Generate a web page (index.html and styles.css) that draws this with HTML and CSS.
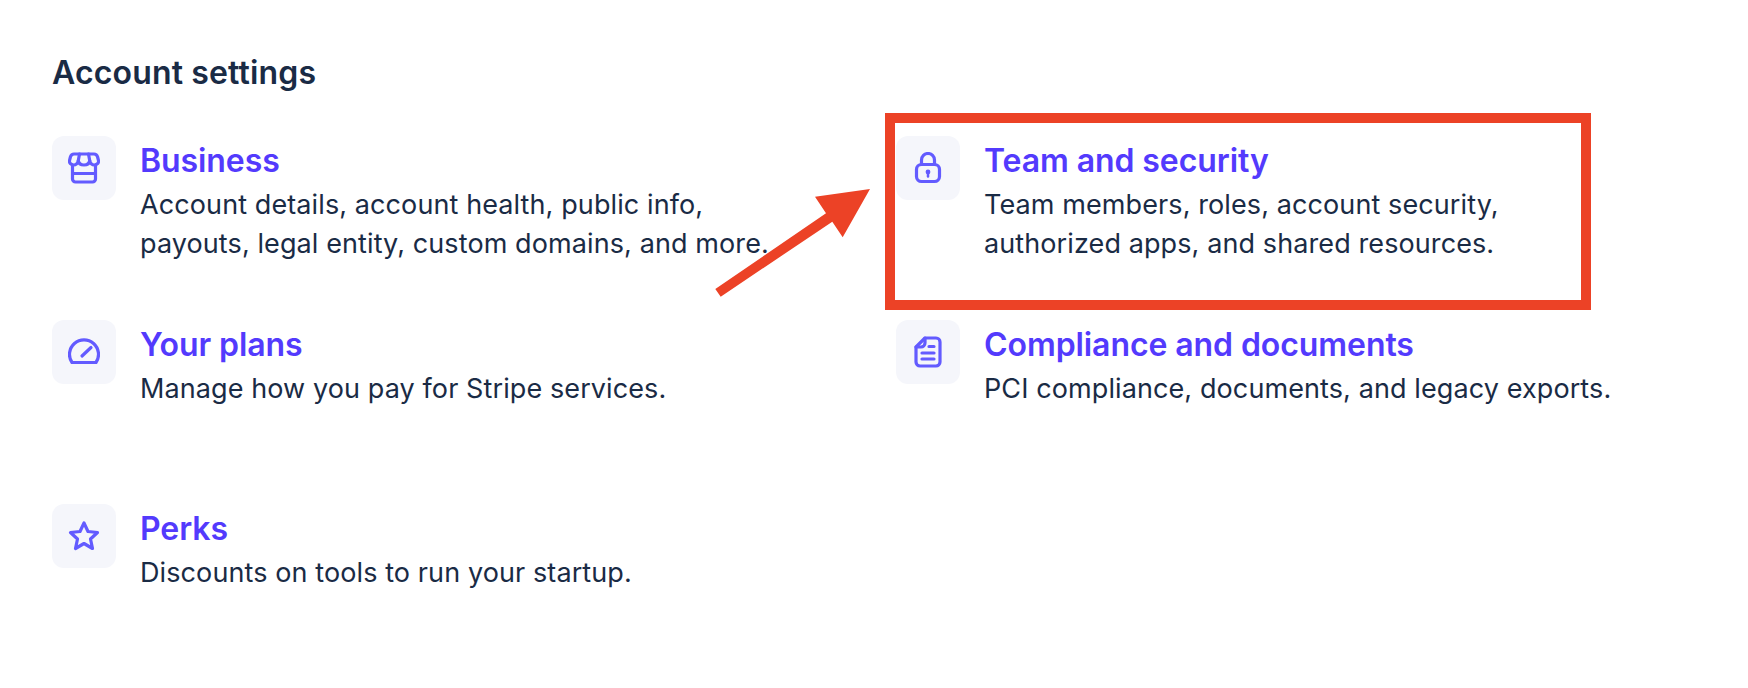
FILE: index.html
```html
<!DOCTYPE html>
<html>
<head>
    <title>Account settings</title>
    <link rel="stylesheet" href="styles.css">
</head>
<body>
    <h1 class="page-title">Account settings</h1>

    <div class="settings-grid">
        <a class="item" href="#">
            <span class="tile">
                <svg class="icon" viewBox="0 0 32 32">
                    <path d="M6 2h20c2 0 3 1 3.600 3l.9 3.500c.4 2.500-1.600 4.500-4 4.500-2.400 0-4.500-1.800-4.800-4.500-.3 2.700-2.400 4.500-5.700 4.500s-5.400-1.800-5.700-4.500C10 11.200 7.900 13 5.500 13c-2.400 0-4.400-2-4-4.500l.9-3.500c.6-2 1.600-3 3.600-3z"/>
                    <path d="M10.300 8.500 11.500 2M21.700 8.500 20.500 2"/>
                    <path d="M4.500 13v14a3 3 0 0 0 3 3h17a3 3 0 0 0 3-3V13M4.500 21.500h23"/>
                </svg>
            </span>
            <span class="text">
                <span class="name">Business</span>
                <span class="desc">Account details, account health, public info,<br>payouts, legal entity, custom domains, and more.</span>
            </span>
        </a>

        <a class="item" href="#">
            <span class="tile">
                <svg class="icon" viewBox="0 0 32 32">
                    <rect x="4.500" y="12.500" width="23" height="17" rx="5"/>
                    <path d="M9.500 12V8a6.500 6.500 0 0 1 13 0v4"/>
                    <circle class="solid" cx="16" cy="20" r="2.400"/>
                    <path class="thin" d="M16 20v4.500"/>
                </svg>
            </span>
            <span class="text">
                <span class="name">Team and security</span>
                <span class="desc">Team members, roles, account security,<br>authorized apps, and shared resources.</span>
            </span>
        </a>

        <a class="item" href="#">
            <span class="tile">
                <svg class="icon" viewBox="0 0 32 32">
                    <path d="M4 26.500h24a14.500 14.500 0 1 0-24 0z"/>
                    <path d="M14 20l9-8.500"/>
                </svg>
            </span>
            <span class="text">
                <span class="name">Your plans</span>
                <span class="desc">Manage how you pay for Stripe services.</span>
            </span>
        </a>

        <a class="item" href="#">
            <span class="tile">
                <svg class="icon" viewBox="0 0 32 32">
                    <path d="M13 2h11a4 4 0 0 1 4 4v20a4 4 0 0 1-4 4H8a4 4 0 0 1-4-4V11z"/>
                    <path d="M13 2v5a4 4 0 0 1-4 4H4"/>
                    <path d="M17 10.500h5M10 17h12M10 23h12"/>
                </svg>
            </span>
            <span class="text">
                <span class="name">Compliance and documents</span>
                <span class="desc">PCI compliance, documents, and legacy exports.</span>
            </span>
        </a>

        <a class="item" href="#">
            <span class="tile">
                <svg class="icon" viewBox="0 0 32 32">
                    <path d="M16 3l4 8.500 9.500 1-7 6.500 2 9.500-8.500-5-8.500 5 2-9.500-7-6.500 9.500-1z"/>
                </svg>
            </span>
            <span class="text">
                <span class="name">Perks</span>
                <span class="desc">Discounts on tools to run your startup.</span>
            </span>
        </a>
    </div>

    <!-- annotation drawn over the page -->
    <div class="highlight"></div>
    <svg class="arrow" width="1748" height="688" viewBox="0 0 1748 688">
        <polygon points="870,189 815,196.700 826,213.300 715.300,289 720.700,296.700 832.300,221.700 842.700,237.300"/>
    </svg>
</body>
</html>
```

FILE: styles.css
```css
body { margin: 0; padding: 0 0 0 52px; height: 688px; box-sizing: border-box; overflow: hidden; background: #fff; font-family: Inter, "Liberation Sans", sans-serif; color: #1a2b45; position: relative; }
.page-title { margin: 0; padding-top: 53px; font-size: 32px; line-height: 40px; font-weight: 600; letter-spacing: 0.15px; color: #1a2b45; }
.settings-grid { display: grid; grid-template-columns: 844px 844px; grid-auto-rows: 184px; margin-top: 43px; }
.item { display: flex; gap: 24px; text-decoration: none; color: inherit; }
.tile { flex: none; width: 64px; height: 64px; border-radius: 12px; background: #f5f6fb; display: flex; align-items: center; justify-content: center; }
.icon { width: 32px; height: 32px; fill: none; stroke: #635bff; stroke-width: 3.200; stroke-linecap: round; stroke-linejoin: round; }
.icon .solid { fill: #635bff; stroke: none; }
.icon .thin { stroke-width: 2.500; }
.text { display: block; }
.name { display: block; font-size: 32px; line-height: 40px; font-weight: 600; letter-spacing: -0.08px; color: #533afd; padding-top: 5px; }
.desc { display: block; font-size: 27px; line-height: 39px; margin-top: 4px; letter-spacing: 0.1px; color: #1a2b45; }
.highlight { position: absolute; left: 885px; top: 113px; width: 706px; height: 197px; box-sizing: border-box; border: 10px solid #ec4226; }
.arrow { position: absolute; left: 0; top: 0; }
.arrow polygon { fill: #ec4226; }
```
